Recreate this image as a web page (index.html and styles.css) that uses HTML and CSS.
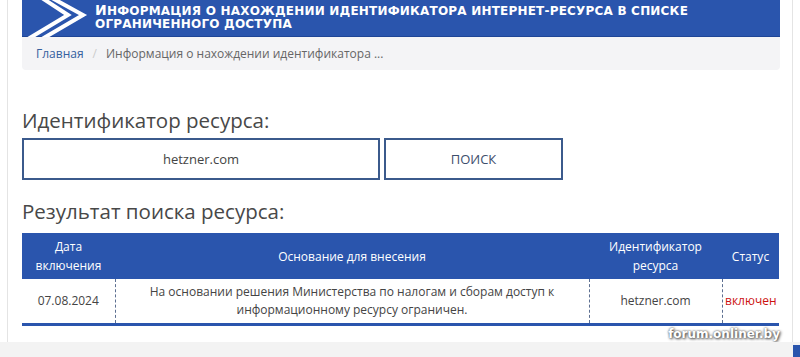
FILE: index.html
```html
<!DOCTYPE html>
<html lang="ru">
<head>
    <meta charset="UTF-8">
    <title>Информация о нахождении идентификатора</title>
    <link rel="stylesheet" href="styles.css">
</head>
<body>
    <div class="page">
        <div class="head">
            <svg class="logo" width="70" height="37" viewBox="0 0 70 37">
                <polyline points="20,-2 46,15 6,39" fill="none" stroke="#fff" stroke-width="4"/>
                <polyline points="30,-2 61,15 20,39" fill="none" stroke="#fff" stroke-width="4"/>
            </svg>
            <h1 class="title">Информация о нахождении идентификатора интернет-ресурса в списке<br>ограниченного доступа</h1>
        </div>
        <div class="crumbs">
            <a href="#">Главная</a>
            <span class="sep">/</span>
            <span class="cur">Информация о нахождении идентификатора ...</span>
        </div>

        <h2 class="label">Идентификатор ресурса:</h2>
        <div class="search">
            <div class="field">hetzner.com</div>
            <div class="btn">ПОИСК</div>
        </div>

        <h2 class="label result">Результат поиска ресурса:</h2>
        <table class="res">
            <thead>
                <tr>
                    <th class="c1">Дата<br>включения</th>
                    <th class="c2">Основание для внесения</th>
                    <th class="c3">Идентификатор<br>ресурса</th>
                    <th class="c4">Статус</th>
                </tr>
            </thead>
            <tbody>
                <tr>
                    <td>07.08.2024</td>
                    <td>На основании решения Министерства по налогам и сборам доступ к<br>информационному ресурсу ограничен.</td>
                    <td>hetzner.com</td>
                    <td class="on">включен</td>
                </tr>
            </tbody>
        </table>
        <div class="mark">forum.onliner.by</div>
    </div>
    <div class="bottom"><span class="task"></span></div>
</body>
</html>
```

FILE: styles.css
```css
* {
    margin: 0;
    padding: 0;
    box-sizing: border-box;
}

body {
    background: #fff;
    font-family: "Open Sans", "Noto Sans", sans-serif;
    color: #444;
    overflow: hidden;
}

.page {
    position: relative;
    margin-left: 7px;
    width: 786px;
    height: 342px;
    padding: 0 12px 0 14px;
    border-left: 1px solid #e4e4e4;
    border-right: 1px solid #e4e4e4;
}

.head {
    height: 37px;
    background: #2a55ad;
    display: flex;
    align-items: center;
    border-bottom: 1px solid #1e4596;
}

.logo {
    flex: none;
    display: block;
}

.title {
    margin-left: 3px;
    color: #fff;
    font-family: "DejaVu Sans", sans-serif;
    font-weight: bold;
    font-size: 12px;
    text-transform: uppercase;
    letter-spacing: 0.2px;
    line-height: 13px;
    white-space: nowrap;
    margin-top: -1px;
}

.title::first-letter {
    font-size: 14px;
}

.crumbs {
    height: 33px;
    background: #f4f4f6;
    border-radius: 0 0 4px 4px;
    display: flex;
    align-items: center;
    padding-left: 14px;
    font-size: 12px;
}

.crumbs a {
    color: #35609e;
    text-decoration: none;
}

.crumbs .sep {
    color: #ccc;
    margin: 0 9px;
}

.crumbs .cur {
    color: #666;
}

.label {
    font-weight: normal;
    font-size: 20.5px;
    color: #484848;
    margin-top: 35px;
    height: 33px;
    line-height: 31px;
}

.label.result {
    margin-top: 16px;
    height: 37px;
    line-height: 30px;
}

.search {
    display: flex;
    gap: 4px;
}

.field,
.btn {
    height: 42px;
    border: 2px solid #3b5a8c;
    display: flex;
    align-items: center;
    justify-content: center;
    font-size: 13px;
    color: #444;
}

.field {
    width: 358px;
}

.btn {
    width: 179px;
    color: #3d4e6c;
}

.res {
    width: 757px;
    border-collapse: collapse;
    font-size: 12px;
    border-bottom: 3px solid #2a55ad;
}

.res th {
    background: #2a55ad;
    color: #fff;
    font-weight: normal;
    height: 46px;
    line-height: 19px;
    text-align: center;
}

.res td {
    height: 45px;
    line-height: 18px;
    text-align: center;
    border-left: 1px dashed #5d6f91;
    color: #444;
}

.res td:first-child {
    border-left: none;
}

.res .c1 { width: 93px; }
.res .c2 { width: 474px; }
.res .c3 { width: 133px; }

.res td.on {
    color: #cc1111;
}

.mark {
    position: absolute;
    right: 12px;
    top: 327px;
    font-family: "DejaVu Sans", sans-serif;
    font-weight: bold;
    font-size: 12px;
    color: #fff;
    text-shadow: 0 0 2px #555, 1px 1px 3px #333;
}

.bottom {
    height: 15px;
    background: #f3f3f3;
    position: relative;
}

.task {
    position: absolute;
    right: 0;
    top: 3px;
    width: 7px;
    height: 12px;
    background: #2a55ad;
}
```
